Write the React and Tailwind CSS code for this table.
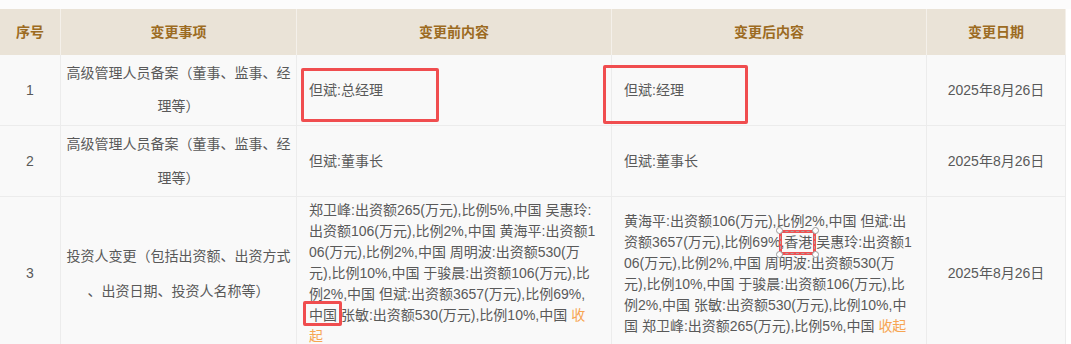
import React from "react";

function Cell({ children, className = "" }) {
  return (
    <div className={"relative flex items-center border-r border-[#ececec] " + className}>
      {children}
    </div>
  );
}

function HCell({ children }) {
  return (
    <div className="flex items-center justify-center border-r border-[#f4f0ea] text-[14px] font-bold text-[#9c6b22]">
      {children}
    </div>
  );
}

const cols = "grid grid-cols-[61px_236px_315px_315px_139px]";

function Mark({ children }) {
  return (
    <span className="relative inline-block">
      {children}
      <span className="absolute left-[-6px] right-[-5px] top-[-4px] h-[25px] rounded-[2px] border-[3px] border-[#f04d4f]" />
    </span>
  );
}

function Handle({ className }) {
  return (
    <span className={"absolute h-[7px] w-[7px] rounded-full border border-[#9a9a9a] bg-white " + className} />
  );
}

function MarkSel({ children }) {
  return (
    <span className="relative inline-block">
      {children}
      <span className="absolute left-[-5px] right-[-4px] top-[-2px] bottom-[-2px] border-[3px] border-[#ef5254]">
        <span className="absolute inset-[-2px] border border-dashed border-[#b0a0a0]" />
      </span>
      <Handle className="left-[-8px] top-[-5px]" />
      <Handle className="right-[-7px] top-[-5px]" />
      <Handle className="left-[-8px] bottom-[-5px]" />
      <Handle className="right-[-7px] bottom-[-5px]" />
    </span>
  );
}

function Item({ a, b, lh }) {
  return (
    <Cell className="justify-center text-center">
      <div className="flex flex-col items-center">
        <div className={lh}>{a}</div>
        <div className={lh}>{b}</div>
      </div>
    </Cell>
  );
}

export default function App() {
  const body = "text-[14px] text-[#595959]";
  return (
    <div className="h-[344px] w-[1071px] overflow-hidden bg-white font-['Liberation_Sans','Noto_Sans_CJK_SC',sans-serif]">
      <div className="h-[9px] bg-[#fcfcfc]" />
      <div className="w-[1066px]">
        {/* header */}
        <div className={cols + " h-[46px] bg-[#eae3d7]"}>
          <HCell>序号</HCell>
          <HCell>变更事项</HCell>
          <HCell>变更前内容</HCell>
          <HCell>变更后内容</HCell>
          <HCell>变更日期</HCell>
        </div>

        {/* row 1 */}
        <div className={cols + " h-[71px] border-b border-[#ececec] bg-[#f9f9f9] " + body}>
          <Cell className="justify-center">1</Cell>
          <Item a="高级管理人员备案（董事、监事、经" b="理等）" lh="h-[33px] leading-[33px]" />
          <Cell className="pl-[12px]">
            <span>但斌:总经理</span>
            <div className="absolute left-[4px] top-[13px] h-[54px] w-[138px] rounded-[2px] border-[3px] border-[#f04d4f]" />
          </Cell>
          <Cell className="pl-[12px]">
            <span>但斌:经理</span>
            <div className="absolute left-[-9px] top-[10px] h-[59px] w-[145px] rounded-[2px] border-[3px] border-[#f04d4f]" />
          </Cell>
          <Cell className="justify-center">2025年8月26日</Cell>
        </div>

        {/* row 2 */}
        <div className={cols + " h-[71px] border-b border-[#ececec] bg-[#f9f9f9] " + body}>
          <Cell className="justify-center">2</Cell>
          <Item a="高级管理人员备案（董事、监事、经" b="理等）" lh="h-[34px] leading-[34px]" />
          <Cell className="pl-[12px]">但斌:董事长</Cell>
          <Cell className="pl-[12px]">但斌:董事长</Cell>
          <Cell className="justify-center">2025年8月26日</Cell>
        </div>

        {/* row 3 */}
        <div className={cols + " border-b border-[#ececec] bg-[#f9f9f9] " + body}>
          <Cell className="justify-center">3</Cell>
          <Item a="投资人变更（包括出资额、出资方式" b="、出资日期、投资人名称等）" lh="h-[35px] leading-[35px]" />
          <Cell className="py-[3px] pl-[12px]">
            <div className="whitespace-nowrap leading-[21px]">
              <div>郑卫峰:出资额265(万元),比例5%,中国 吴惠玲:</div>
              <div>出资额106(万元),比例2%,中国 黄海平:出资额1</div>
              <div>06(万元),比例2%,中国 周明波:出资额530(万</div>
              <div>元),比例10%,中国 于骏晨:出资额106(万元),比</div>
              <div>例2%,中国 但斌:出资额3657(万元),比例69%,</div>
              <div>
                <Mark>中国</Mark> 张敏:出资额530(万元),比例10%,中国{" "}
                <span className="text-[#f7a552]">收</span>
              </div>
              <div className="text-[#f7a552]">起</div>
            </div>
          </Cell>
          <Cell className="py-[3px] pl-[12px]">
            <div className="whitespace-nowrap leading-[21px]">
              <div>黄海平:出资额106(万元),比例2%,中国 但斌:出</div>
              <div>
                资额3657(万元),比例69%,<MarkSel>香港</MarkSel> 吴惠玲:出资额1
              </div>
              <div>06(万元),比例2%,中国 周明波:出资额530(万</div>
              <div>元),比例10%,中国 于骏晨:出资额106(万元),比</div>
              <div>例2%,中国 张敏:出资额530(万元),比例10%,中</div>
              <div>
                国 郑卫峰:出资额265(万元),比例5%,中国{" "}
                <span className="text-[#f7a552]">收起</span>
              </div>
            </div>
          </Cell>
          <Cell className="justify-center">2025年8月26日</Cell>
        </div>
      </div>
    </div>
  );
}
